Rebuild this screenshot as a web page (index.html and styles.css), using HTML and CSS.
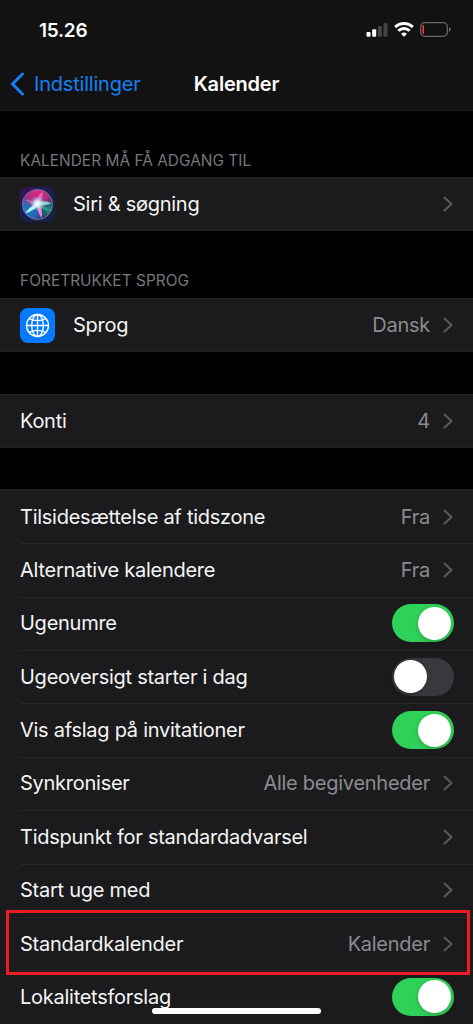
FILE: index.html
```html
<!DOCTYPE html>
<html lang="da">
<head>
<meta charset="utf-8">
<meta name="viewport" content="width=device-width">
<title>Kalender</title>
<link rel="stylesheet" href="styles.css">
</head>
<body>
<svg class="defs" aria-hidden="true">
  <symbol id="chevron" viewBox="0 0 10 16"><path d="M1.500 1.500 8.500 8l-7 6.500" fill="none" stroke="currentColor" stroke-width="2" stroke-linecap="round" stroke-linejoin="round"/></symbol>
</svg>
<div class="screen">
  <header class="header">
    <div class="status">
      <span class="time">15.26</span>
      <div class="indicators">
        <svg class="signal" viewBox="0 0 22 15"><g fill="#fff"><rect x="0.500" y="10" width="4" height="4.700" rx="1"/><rect x="6.200" y="7.200" width="4" height="7.500" rx="1"/></g><g fill="#444446"><rect x="11.900" y="4" width="4" height="10.700" rx="1"/><rect x="17.500" y="1" width="4" height="13.700" rx="1"/></g></svg>
        <svg class="wifi" viewBox="0 0 20 15"><g fill="none" stroke="#fff" stroke-width="2.900"><path d="M1.200 5.100a12.500 12.500 0 0 1 17.600 0"/><path d="M4.400 8.800a8 8 0 0 1 11.200 0"/></g><path d="M10 14.800 7.100 11.900a4.100 4.100 0 0 1 5.800 0Z" fill="#fff"/></svg>
        <svg class="battery" viewBox="0 0 31 15"><rect x="0.700" y="0.700" width="26.600" height="13.600" rx="4" fill="none" stroke="#68686a" stroke-width="1.300"/><rect x="2.500" y="3" width="1.500" height="9" rx=".6" fill="#ff3b30"/><path d="M29 5.200q1.800.6 1.800 2.300T29 9.800Z" fill="#68686a"/></svg>
      </div>
    </div>
    <nav class="nav">
      <a class="back"><svg class="back-icon" viewBox="0 0 14 24"><path d="M12.500 2 2.400 12 12.500 22" fill="none" stroke="currentColor" stroke-width="3" stroke-linecap="round" stroke-linejoin="round"/></svg><span>Indstillinger</span></a>
      <h1 class="title">Kalender</h1>
    </nav>
  </header>

  <h2 class="caption caption-first">KALENDER MÅ FÅ ADGANG TIL</h2>
  <section class="group">
    <div class="row">
      <svg class="app-icon" viewBox="0 0 36 36">
        <defs>
          <linearGradient id="siri-bg" x1="0" y1="0" x2="1" y2="1"><stop stop-color="#3c1058"/><stop offset=".5" stop-color="#172052"/><stop offset="1" stop-color="#14233f"/></linearGradient>
          <radialGradient id="pink" cx=".5" cy=".02" r=".65"><stop stop-color="#e5277c"/><stop offset=".6" stop-color="#b02e83"/><stop offset="1" stop-color="#b02e83" stop-opacity="0"/></radialGradient>
          <radialGradient id="blue" cx=".1" cy=".75" r=".65"><stop stop-color="#1684ce"/><stop offset=".6" stop-color="#2460b1"/><stop offset="1" stop-color="#2460b1" stop-opacity="0"/></radialGradient>
          <radialGradient id="green" cx=".95" cy=".7" r=".45"><stop stop-color="#16a27a"/><stop offset="1" stop-color="#167b73" stop-opacity="0"/></radialGradient>
          <radialGradient id="glow"><stop stop-color="#fff"/><stop offset=".35" stop-color="#e5faff" stop-opacity=".85"/><stop offset="1" stop-color="#9bf" stop-opacity="0"/></radialGradient>
        </defs>
        <rect width="36" height="36" rx="8" fill="url(#siri-bg)"/>
        <circle cx="18" cy="18" r="15" fill="#332465"/><circle cx="18" cy="18" r="15" fill="url(#blue)"/><circle cx="18" cy="18" r="15" fill="url(#green)"/><circle cx="18" cy="18" r="15" fill="url(#pink)"/>
        <path d="M18 18Q11 12 5 13q5 5 13 5Z" fill="#d58bd4" opacity=".45"/>
        <path d="M18 17Q17 9 23 5q2 7-5 12Z" fill="#f58bcb" opacity=".6"/>
        <path d="M18 16Q26 13 32 17q-7 3-14 1Z" fill="#8ef0df" opacity=".85"/>
        <path d="M17 16Q10 21 5 27q9-2 14-9Z" fill="#b4fff9"/>
        <path d="M17 17Q18 26 22 32q2-7-2-15Z" fill="#ff8bda" opacity=".9"/>
        <path d="M18 17Q23 24 30 25q-3-7-12-8Z" fill="#21c993" opacity=".6"/>
        <circle cx="18" cy="17" r="8" fill="url(#glow)"/>
        <circle cx="18" cy="18" r="15.500" fill="none" stroke="#9b91b5" stroke-width="1" opacity=".8"/>
      </svg>
      <span class="label">Siri &amp; søgning</span><svg class="chevron"><use href="#chevron"/></svg>
    </div>
  </section>

  <h2 class="caption">FORETRUKKET SPROG</h2>
  <section class="group">
    <div class="row">
      <svg class="app-icon" viewBox="0 0 36 36"><rect width="36" height="36" rx="8" fill="#067aff"/><g fill="none" stroke="#fff" stroke-width="1.400"><circle cx="18" cy="18" r="11.300"/><ellipse cx="18" cy="18" rx="6" ry="11.300"/><path d="M18 7v22M7 18h22M9.500 11q8.500 4 17 0M9.500 25q8.500-4 17 0"/></g></svg>
      <span class="label">Sprog</span><span class="value">Dansk</span><svg class="chevron"><use href="#chevron"/></svg>
    </div>
  </section>

  <section class="group spaced">
    <div class="row"><span class="label">Konti</span><span class="value">4</span><svg class="chevron"><use href="#chevron"/></svg></div>
  </section>

  <section class="group spaced-list">
    <div class="row"><span class="label">Tilsidesættelse af tidszone</span><span class="value">Fra</span><svg class="chevron"><use href="#chevron"/></svg></div>
    <div class="row"><span class="label">Alternative kalendere</span><span class="value">Fra</span><svg class="chevron"><use href="#chevron"/></svg></div>
    <div class="row"><span class="label">Ugenumre</span><span class="switch on"></span></div>
    <div class="row"><span class="label">Ugeoversigt starter i dag</span><span class="switch"></span></div>
    <div class="row"><span class="label">Vis afslag på invitationer</span><span class="switch on"></span></div>
    <div class="row"><span class="label">Synkroniser</span><span class="value">Alle begivenheder</span><svg class="chevron"><use href="#chevron"/></svg></div>
    <div class="row"><span class="label">Tidspunkt for standardadvarsel</span><svg class="chevron"><use href="#chevron"/></svg></div>
    <div class="row"><span class="label">Start uge med</span><svg class="chevron"><use href="#chevron"/></svg></div>
    <div class="row highlighted"><span class="label">Standardkalender</span><span class="value">Kalender</span><svg class="chevron"><use href="#chevron"/></svg></div>
    <div class="row"><span class="label">Lokalitetsforslag</span><span class="switch on"></span></div>
  </section>
  <div class="home-bar"></div>
</div>
</body>
</html>
```
FILE: styles.css
```css
* { box-sizing: border-box; }
body { margin: 0; background: #000; }
.defs { display: none; }
.screen {
  position: relative;
  width: 473px;
  height: 1024px;
  overflow: hidden;
  background: #000;
  color: #f5f5f5;
  font: 400 20px/26px Inter, "Liberation Sans", sans-serif;
  letter-spacing: -0.26px;
}
.header { height: 111px; background: #121212; border-bottom: 1px solid #1b1b1c; }
.status { display: flex; justify-content: space-between; height: 57px; padding: 17px 22px 0 39px; }
.time { padding-top: 1px; font-size: 19px; font-weight: 600; letter-spacing: -0.25px; color: #fff; }
.indicators { display: flex; gap: 6px; padding-top: 5px; }
.signal { width: 22px; height: 15px; }
.wifi { width: 20px; height: 15px; }
.battery { width: 31px; height: 15px; }
.nav { display: grid; grid-template-columns: 1fr auto 1fr; align-items: center; height: 54px; padding: 0 10px; }
.back { display: flex; align-items: center; gap: 10px; color: #1380f5; letter-spacing: -0.2px; }
.back-icon { width: 14px; height: 24px; }
.title { margin: 0; font-size: 20px; font-weight: 600; letter-spacing: -0.2px; color: #fff; }
.caption {
  height: 67px;
  margin: 0;
  padding: 40px 20px 0;
  font-size: 15.400px;
  font-weight: 400;
  line-height: 20px;
  letter-spacing: 0.04px;
  color: #77777c;
}
.caption-first { height: 66px; }
.group { background: #1b1b1d; border-top: 1px solid #242426; border-bottom: 1px solid #222224; }
.spaced { margin-top: 42px; }
.spaced-list { margin-top: 41px; }
.row { position: relative; display: flex; align-items: center; height: 53.360px; padding: 0 20px; }
.group .row:only-child { height: 52px; }
.row + .row::before { content: ""; position: absolute; top: 0; left: 20px; right: 0; height: 1px; background: #28282a; }
.app-icon { width: 35px; height: 35px; margin-right: 18px; }
.label { flex: 1; white-space: nowrap; }
.value { color: #8b8b90; white-space: nowrap; }
.chevron { width: 10px; height: 16px; margin-left: 13px; color: #5b5b5f; }
.switch { width: 62px; height: 38px; margin-right: -0.500px; padding: 2.500px; border-radius: 19px; background: #39393d; }
.switch::after { content: ""; display: block; width: 33px; height: 33px; border-radius: 50%; background: #fff; box-shadow: 0 2px 5px #0003; }
.switch.on { background: #30d158; }
.switch.on::after { margin-left: auto; }
.highlighted { z-index: 1; }
.highlighted::after { content: ""; position: absolute; inset: -7px 3px -5px 6px; border: 3px solid #ed1c24; }
.home-bar { position: absolute; z-index: 2; left: 152px; top: 1008px; width: 169px; height: 6px; border-radius: 3px; background: #fff; }
```
